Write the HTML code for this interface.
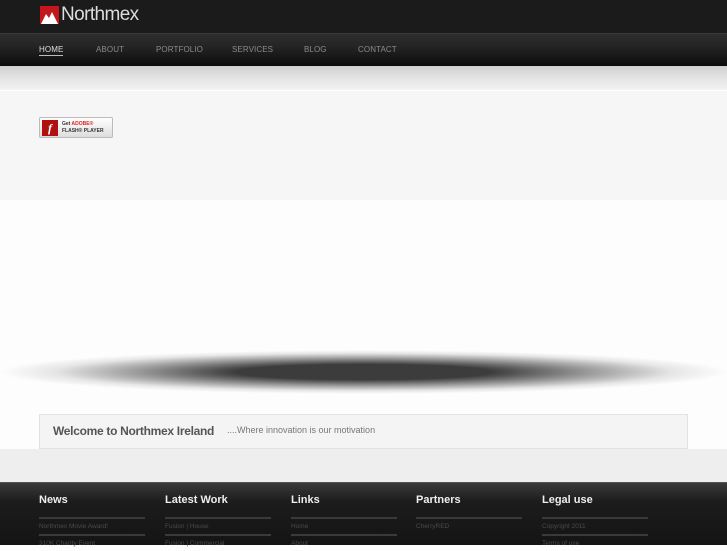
<!DOCTYPE html>
<html><head><meta charset="utf-8"><style>
*{margin:0;padding:0;box-sizing:border-box}
body{width:727px;height:545px;overflow:hidden;background:#fdfdfd;font-family:"Liberation Sans",sans-serif;position:relative}
.top{position:absolute;left:0;top:0;width:727px;height:33px;background:#1b1b1b}
.nav{position:absolute;left:0;top:33px;width:727px;height:33px;background:linear-gradient(#2e2e2e,#242424 40%,#0c0c0c);border-top:1px solid #3a3a3a}
.nav span{position:absolute;top:11px;font-size:8px;color:#8a8a8a;letter-spacing:.1px}
.band1{position:absolute;left:0;top:66px;width:727px;height:24px;background:linear-gradient(#cfcfcf,#e4e4e4 50%,#f2f2f2)}
.light{position:absolute;left:0;top:90px;width:727px;height:110px;background:#f6f6f7;border-top:1px solid #fff}
.shadow{position:absolute;left:0;top:350px;width:727px;height:44px;border-radius:50%;background:radial-gradient(ellipse closest-side at center,#3c3c3c 0%,#3c3c3c 35%,rgba(60,60,60,.55) 60%,rgba(60,60,60,.12) 85%,rgba(60,60,60,0) 100%)}
.welcome{position:absolute;left:39px;top:414px;width:649px;height:35px;background:#f4f4f4;border:1px solid #e2e2e2}
.grey{position:absolute;left:0;top:449px;width:727px;height:33px;background:#eeeeee}
.foot{position:absolute;left:0;top:482px;width:727px;height:63px;background:linear-gradient(#3a3a3a,#1c1c1c 30%,#141414);border-top:1px solid #555}
.col{position:absolute;top:11px;width:106px}
.col h3{font-size:11px;color:#eee;font-weight:bold;height:23px}
.col i{display:block;height:2px;background:#3a3a3a;margin-bottom:4px}
.col p{font-size:6.5px;color:#4a4a4a;height:11px}
</style></head><body>
<div class="top">
<div style="position:absolute;left:40px;top:6px;width:19px;height:18px;background:#c4161c;overflow:hidden"><svg width="19" height="18"><path d="M1 18 L6 8 L9 12 L12 6 L18 18Z" fill="#fff"/></svg></div>
<div style="position:absolute;left:61px;top:4px;font-size:19px;color:#ddd;letter-spacing:-.6px">Northmex</div>
</div>
<div class="nav">
<span style="left:39px;color:#ddd;border-bottom:1px solid #bbb;padding-bottom:1px">HOME</span>
<span style="left:96px">ABOUT</span>
<span style="left:156px">PORTFOLIO</span>
<span style="left:232px">SERVICES</span>
<span style="left:304px">BLOG</span>
<span style="left:358px">CONTACT</span>
</div>
<div class="band1"></div>
<div class="light">
<div style="position:absolute;left:39px;top:26px;width:74px;height:21px;background:linear-gradient(#fff,#ddd);border:1px solid #bbb;border-radius:2px">
<div style="position:absolute;left:2px;top:2px;width:16px;height:16px;background:#b01010;color:#fff;font:italic bold 12px 'Liberation Serif',serif;text-align:center;line-height:16px">f</div>
<div style="position:absolute;left:22px;top:3px;font-size:5px;line-height:7px;color:#333;font-weight:bold">Get <span style="color:#d22">ADOBE®</span><br>FLASH® PLAYER</div>
</div>
</div>
<div class="shadow"></div>
<div class="welcome">
<span style="position:absolute;left:13px;top:9px;font-size:12px;font-weight:bold;color:#555;letter-spacing:-.3px">Welcome to Northmex Ireland</span>
<span style="position:absolute;left:187px;top:10px;font-size:9px;color:#777">....Where innovation is our motivation</span>
</div>
<div class="grey"></div>
<div class="foot">
<div class="col" style="left:39px"><h3>News</h3><i></i><p>Northmex Movie Award!</p><i></i><p>310K Charity Event</p></div>
<div class="col" style="left:165px"><h3>Latest Work</h3><i></i><p>Fusion | House</p><i></i><p>Fusion | Commercial</p></div>
<div class="col" style="left:291px"><h3>Links</h3><i></i><p>Home</p><i></i><p>About</p></div>
<div class="col" style="left:416px"><h3>Partners</h3><i></i><p>CherryRED</p></div>
<div class="col" style="left:542px"><h3>Legal use</h3><i></i><p>Copyright 2011</p><i></i><p>Terms of use</p></div>
</div>
</body></html>
